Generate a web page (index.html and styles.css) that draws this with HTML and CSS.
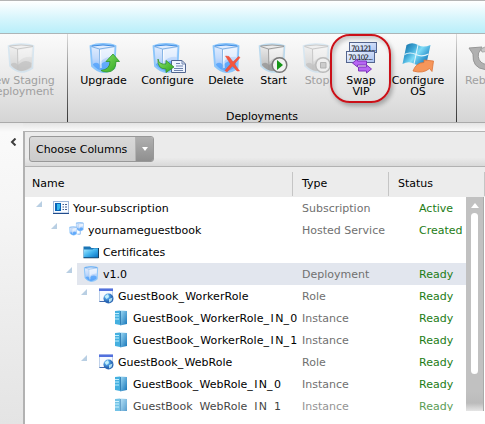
FILE: index.html
```html
<!DOCTYPE html>
<html lang="en">
<head>
<meta charset="utf-8">
<title>Deployments</title>
<link rel="stylesheet" href="styles.css">
</head>
<body>
<svg class="defs" aria-hidden="true">
  <defs>
    <linearGradient id="gBlue" x1="0" y1="0" x2="0" y2="1"><stop offset="0" stop-color="#e6f0ff"/><stop offset=".5" stop-color="#c3dafb"/><stop offset="1" stop-color="#7db8fb"/></linearGradient>
    <linearGradient id="gGray" x1="0" y1="0" x2="0" y2="1"><stop offset="0" stop-color="#f0f0f0"/><stop offset="1" stop-color="#b4b4b4"/></linearGradient>
    <linearGradient id="gGreen" x1="0" y1="0" x2="1" y2="1"><stop offset="0" stop-color="#8be36a"/><stop offset="1" stop-color="#2ba51c"/></linearGradient>
    <linearGradient id="gServer" x1="0" y1="0" x2="1" y2="1"><stop offset="0" stop-color="#a4def8"/><stop offset="1" stop-color="#1474b8"/></linearGradient>
    <linearGradient id="gFolder" x1="0" y1="0" x2="1" y2="1"><stop offset="0" stop-color="#a9eaff"/><stop offset=".5" stop-color="#43b4ee"/><stop offset="1" stop-color="#0873c4"/></linearGradient>
    <radialGradient id="gGlobe" cx=".35" cy=".3"><stop offset="0" stop-color="#b6ecff"/><stop offset=".5" stop-color="#4c9de2"/><stop offset="1" stop-color="#2a66b4"/></radialGradient>
    <linearGradient id="gWin" gradientUnits="userSpaceOnUse" x1="2" y1="2" x2="26" y2="22"><stop offset="0" stop-color="#1672a8"/><stop offset=".3" stop-color="#3fa7d6"/><stop offset=".5" stop-color="#7fdcf7"/><stop offset=".75" stop-color="#3a9fd4"/><stop offset="1" stop-color="#1268ad"/></linearGradient>
    <linearGradient id="gIp" x1="0" y1="0" x2="1" y2="1"><stop offset="0" stop-color="#f0f5ff"/><stop offset="1" stop-color="#a9c1f0"/></linearGradient>
  </defs>
  <symbol id="cube" viewBox="0 0 28 30">
    <path d="M1.500 3Q7 .9 14 1Q22 .9 26.500 3L25.500 25Q20 29 14 29Q8 28 3 23Z" fill="url(#gBlue)" stroke="#8ac5fb" stroke-width="1.800"/>
    <path d="M11 7L25 4.500L24.500 14Q17 13 11 19Z" fill="#fff" opacity=".5"/>
    <path d="M4 21Q8 18 11 22Q18 15 24.500 20L24 24Q18 28 14 28Q8 27 4 22Z" fill="#3f98fa" opacity=".65"/>
    <path d="M2 3.500L10.500 6L26 3.500M10.500 6L11 27" fill="none" stroke="#82b2e4"/>
    <path d="M3 3Q14 1 25 3" fill="none" stroke="#3f8be0"/>
    <path d="M11.500 7L12 25" stroke="#fff"/>
  </symbol>
  <symbol id="cubeg" viewBox="0 0 28 30">
    <path d="M1.500 3Q7 .9 14 1Q22 .9 26.500 3L25.500 25Q20 29 14 29Q8 28 3 23Z" fill="url(#gGray)" stroke="#bcdaee" stroke-width="1.600"/>
    <path d="M11 7L25 4.500L24.500 14Q17 13 11 19Z" fill="#fff" opacity=".5"/>
    <path d="M4 21Q8 18 11 22Q18 15 24.500 20L24 24Q18 28 14 28Q8 27 4 22Z" fill="#888" opacity=".6"/>
    <path d="M2.500 3.500L10.500 6L26 3.500M10.500 6L11 27M2.500 3Q14 1 26 3" fill="none" stroke="#959595" stroke-width=".9"/>
  </symbol>
  <symbol id="subscription" viewBox="0 0 16 13">
    <rect x=".5" y=".5" width="15" height="11.500" fill="#f8fbff" stroke="#9fb6d8"/><path d="M0 12.500H16" stroke="#214c8c"/>
    <rect x="2" y="2" width="6" height="8" fill="#0863b7"/><path d="M4 3H7V7L6 9H4Z" fill="#36b8ee"/>
    <path d="M9.500 3.500H11M12 3.500H14M9.500 6H11M12 6H14M9.500 8.500H11M12 8.500H14" stroke="#435f91"/>
  </symbol>
  <symbol id="service" viewBox="0 0 18 16">
    <use href="#cube" x="8" y="0" width="9" height="10"/><use href="#cube" x="1" y="4" width="9" height="11"/>
    <path d="M10 13H13V9" stroke="#8ab9ef" fill="none"/>
  </symbol>
  <symbol id="folder" viewBox="0 0 16 13">
    <path d="M.5 1H7L8.500 2.500H15.500V12.500H.5Z" fill="#1b75b5"/><path d="M1 4H9.500L11 3H15V11.500H1Z" fill="url(#gFolder)"/><path d="M.5 12.500H15.500V2.500" fill="none" stroke="#173f60"/>
  </symbol>
  <symbol id="role" viewBox="0 0 16 16">
    <rect x="1.500" y="1" width="13" height="12.500" fill="#f6faff" stroke="#c0d2ea"/><path d="M1 .5H15V3H1Z" fill="#5270dd"/><path d="M1.500 13.500H7" stroke="#3f67ac"/>
    <circle cx="10.500" cy="10.500" r="5" fill="url(#gGlobe)"/><path d="M6.500 8.500L10 6L11 9L8.500 11ZM11 11L14.500 9.500L13.500 13L11 14.500Z" fill="#c9f3fa" opacity=".85"/>
  </symbol>
  <symbol id="server" viewBox="0 0 14 16">
    <path d="M1 1L6 .5V15L1 14Z" fill="#45b0e0"/><path d="M6 .5L13 1V14L6 15.500Z" fill="url(#gServer)"/><path d="M1 3.500H5M1 6H5M1 9H5" stroke="#bdefff"/><path d="M6.500 1V14.500" stroke="#2674ac" stroke-width=".8"/>
  </symbol>
</svg>

<header class="banner"></header>
<nav class="ribbon">
  <section class="group first">
    <div class="tools">
      <button class="tool w93 off"><svg class="ico faded" viewBox="0 0 32 30"><use href="#cubeg" x="2" width="28" height="30"/></svg><span>New Staging<br>Deployment</span></button>
    </div>
  </section>
  <section class="group main">
    <div class="tools">
      <button class="tool w63"><svg class="ico" viewBox="0 0 32 30"><use href="#cube" x="1" width="28" height="30"/><path d="M13 27.500Q22 26.500 22 18.500H18L25 11L31.500 18.500H28Q28 29 19 29Q15 29 13 27.500Z" fill="url(#gGreen)" stroke="#2d962a" stroke-width=".8"/></svg><span>Upgrade</span></button>
      <button class="tool w65"><svg class="ico wide" viewBox="0 0 36 30"><use href="#cube" x="2" width="28" height="30"/><path d="M21.500 17.500H32L35.500 21V29.500H21.500Z" fill="#eef4ff" stroke="#51658f"/><path d="M32 17.500V21H35M26 20.500H30M26 23H33M24 25.500H33M24 27.500H33" fill="none" stroke="#6e83ad"/><path d="M8 16Q9 22 16 21V17.500L24 24L16 29.500V26Q7 26 8 16Z" fill="url(#gGreen)" stroke="#38922b" stroke-width=".8"/></svg><span>Configure</span></button>
      <button class="tool w52"><svg class="ico" viewBox="0 0 32 30"><use href="#cube" x="2" width="28" height="30"/><path d="M15.500 13L19 13.500L23 19L28.500 13.500L30 14.500L24.500 21L29.500 28H27L22.500 23L17 29L15 27.500L20.500 21Z" fill="#f4563e" stroke="#e74737" stroke-width=".5"/></svg><span>Delete</span></button>
      <button class="tool w43"><svg class="ico" viewBox="0 0 32 30"><use href="#cubeg" x="0" width="28" height="30"/><circle cx="21.500" cy="22" r="7.300" fill="#f2f2f2" stroke="#777" stroke-width="1.500"/><path d="M19 17V27L25 22Z" fill="#159516"/></svg><span>Start</span></button>
      <button class="tool w44 off"><svg class="ico faded" viewBox="0 0 32 30"><use href="#cubeg" x="1" width="28" height="30"/><circle cx="22" cy="22" r="7.300" fill="#eee" stroke="#888" stroke-width="1.500"/><path d="M19.500 19.500H25V25H19.500Z" fill="#aaa" stroke="#777"/></svg><span>Stop</span></button>
      <div class="swap-slot"><button class="tool w44"><svg class="ico" viewBox="0 0 32 30"><rect x="4.500" y="-.5" width="27" height="10" fill="url(#gIp)" stroke="#54658e"/><rect x="1.500" y="8.500" width="28" height="11" fill="url(#gIp)" stroke="#54658e"/><text x="6" y="7.500" class="ip" textLength="25">70.121...</text><text x="3" y="17" class="ip" textLength="25">70.102...</text><path d="M7.500 20L12.500 16V18H21.500V22H12.500V24Z" fill="#b766f3" stroke="#7f35bd"/><path d="M26.500 26L21.500 22V24H13.500V28H21.500V30Z" fill="#b766f3" stroke="#7f35bd"/></svg><span>Swap<br>VIP</span></button><i class="callout"></i></div>
      <button class="tool w70"><svg class="ico" viewBox="0 0 32 30"><path d="M4.500 2Q10-1.500 16 2Q21 5 28.500 2L24.500 20.500Q18 24 12.500 21Q7 17.500 .5 21Z" fill="url(#gWin)"/><path d="M16 2L12 21M2.500 11.500Q8 8.500 14 11.500Q20 14.500 26.500 11" fill="none" stroke="#e2f5fc" stroke-width="1.100"/><path d="M11 28Q14 19.500 22 19.500V17L31.500 18L30 28.500L27.500 25.500Q21 31 11 28Z" fill="#f6965a" stroke="#dc7339" stroke-width=".8"/></svg><span>Configure<br>OS</span></button>
    </div>
    <div class="caption">Deployments</div>
  </section>
  <section class="group last">
    <div class="tools"><button class="tool w54 off"><svg class="ico" viewBox="0 0 32 30"><path d="M1 5L14 4L12 8L10.500 10Q9 18 16 21Q22 22 25 17L29 20Q25 27 17 26.500Q4 25 5 11Z" fill="#b0b0b0" stroke="#979797"/><path d="M13 6Q20 1 27 8L23 11Q18 7 14 9Z" fill="#c7c7c7" stroke="#a5a5a5"/></svg><span>Reboot</span></button></div>
  </section>
</nav>

<main class="work">
  <aside class="rail"><svg viewBox="0 0 6 8"><path d="M5 .5L1.500 4L5 7.500" fill="none" stroke="#3e3e3e" stroke-width="2"/></svg></aside>
  <section class="panel">
    <div class="toolbar"><button class="choose"><span>Choose Columns</span><i><svg viewBox="0 0 6 4"><path d="M0 0H6L3 4Z" fill="#fff"/></svg></i></button></div>
    <div class="heads"><span class="h-name">Name</span><span class="h-type">Type</span><span class="h-status">Status</span></div>
    <div class="body">
      <div class="rows">
        <div class="row"><span class="name l0"><b></b><svg class="i16"><use href="#subscription" y="1" width="16" height="13"/></svg><em class="sub">Your-subscription</em></span><span class="type">Subscription</span><span class="status">Active</span></div>
        <div class="row"><span class="name l1"><b></b><svg class="i16"><use href="#service" width="17" height="15"/></svg><em>yournameguestbook</em></span><span class="type">Hosted Service</span><span class="status">Created</span></div>
        <div class="row"><span class="name l2"><b class="none"></b><svg class="i16"><use href="#folder" y="1.500" width="16" height="13"/></svg><em class="cert">Certificates</em></span></div>
        <div class="row selected"><span class="name l2"><b></b><svg class="i16"><use href="#cube" width="16" height="16"/></svg><em>v1.0</em></span><span class="type">Deployment</span><span class="status">Ready</span></div>
        <div class="row"><span class="name l3"><b></b><svg class="i16"><use href="#role" width="16" height="16"/></svg><em class="worker">GuestBook<u>_</u>WorkerRole</em></span><span class="type">Role</span><span class="status">Ready</span></div>
        <div class="row"><span class="name l4"><b class="none"></b><svg class="i16"><use href="#server" x="1" width="14" height="16"/></svg><em class="worker">GuestBook<u>_</u>WorkerRole<u>_I</u>N<u>_</u>0</em></span><span class="type">Instance</span><span class="status">Ready</span></div>
        <div class="row"><span class="name l4"><b class="none"></b><svg class="i16"><use href="#server" x="1" width="14" height="16"/></svg><em class="worker">GuestBook<u>_</u>WorkerRole<u>_I</u>N<u>_</u>1</em></span><span class="type">Instance</span><span class="status">Ready</span></div>
        <div class="row"><span class="name l3"><b></b><svg class="i16"><use href="#role" width="16" height="16"/></svg><em>GuestBook<u>_</u>WebRole</em></span><span class="type">Role</span><span class="status">Ready</span></div>
        <div class="row"><span class="name l4"><b class="none"></b><svg class="i16"><use href="#server" x="1" width="14" height="16"/></svg><em>GuestBook<u>_</u>WebRole<u>_I</u>N<u>_</u>0</em></span><span class="type">Instance</span><span class="status">Ready</span></div>
        <div class="row dim"><span class="name l4"><b class="none"></b><svg class="i16"><use href="#server" x="1" width="14" height="16"/></svg><em>GuestBook<u>_</u>WebRole<u>_I</u>N<u>_</u>1</em></span><span class="type">Instance</span><span class="status">Ready</span></div>
      </div>
      <div class="scroll"><svg viewBox="0 0 8 5"><path d="M4 0L8 5H0Z" fill="#fff"/></svg><i></i></div>
    </div>
  </section>
</main>
</body>
</html>
```
FILE: styles.css
```css
* { box-sizing: border-box; }
body { margin: 0; width: 485px; height: 424px; overflow: hidden; background: #fff; font: 11px/11px "DejaVu Sans", sans-serif; color: #000; }
button { font: inherit; color: inherit; border: 0; background: none; padding: 0; margin: 0; }
.defs { display: block; width: 0; height: 0; position: absolute; }
.banner { height: 34px; border-top: 1px solid #b5b5b5; border-bottom: 1px solid #adb5b7; background: linear-gradient(#fff, #d6f5fc 55%, #b9effa); }
.ribbon { display: flex; height: 89px; overflow: hidden; background: linear-gradient(#fbfbfb, #ececec 45%, #d5d5d5); border-bottom: 1px solid #aaa; }
.group { flex: none; position: relative; padding-top: 9px; }
.first { width: 68px; }
.first .tools { margin-left: -26px; }
.main { width: 389px; padding-left: 4px; }
.first, .main { border-right: 1px solid; border-image: linear-gradient(#dedede, #888 45%, #333) 1; border-width: 0 1px 0 0; }
.tools { display: flex; height: 66px; }
.tool { flex: none; display: flex; flex-direction: column; align-items: center; justify-content: flex-start; letter-spacing: -.1px; text-align: center; white-space: nowrap; }
.tool span { margin-top: 2px; }
.off { color: #a0a0a0; }
.ico { flex: none; width: 32px; height: 30px; overflow: visible; }
.wide { width: 36px; }
.faded { opacity: .5; }
.ip { font: 7.5px "DejaVu Sans", sans-serif; fill: #111; }
.w93 { width: 93px; } .w63 { width: 63px; } .w65 { width: 65px; } .w52 { width: 52px; }
.w43 { width: 43px; } .w44 { width: 44px; } .w70 { width: 70px; } .w54 { width: 54px; }
.swap-slot { position: relative; }
.callout { position: absolute; left: -9px; top: -9px; width: 61px; height: 69px; border: 2px solid #cb1018; border-radius: 20px; box-shadow: 2px 3px 4px #0004, inset 2px 3px 4px #0003; }
.caption { text-align: center; height: 13px; line-height: 13px; margin-left: -4px; padding-top: 1px; letter-spacing: -.1px; }
.work { display: flex; height: 301px; }
.rail { width: 23px; padding: 15px 0 0 10px; background: linear-gradient(#e8e8e8, #fafafa 9px, #f5f5f5 30%, #e4e4e4); }
.rail svg { display: block; width: 7px; height: 8px; }
.panel { flex: 1; padding-top: 8px; background: linear-gradient(#e4e4e4, #fafafa 8px, #fff 9px); }
.toolbar { height: 36px; border: solid #b2b2b2; border-width: 1px 0 1px 2px; padding: 4px 0 0 4px; background: linear-gradient(#ebebeb 75%, #d9d9d9); }
.choose { display: flex; width: 125px; height: 26px; border: 1px solid #989898; border-radius: 3px; background: linear-gradient(#d9d9d9, #cbcbcb); overflow: hidden; }
.choose span { flex: 1; line-height: 25px; text-align: left; padding-left: 6px; white-space: nowrap; letter-spacing: -.05px; }
.choose i { width: 18px; background: linear-gradient(#b0b0b0, #8f8f8f); border-left: 1px solid #b3b3b3; display: flex; align-items: center; justify-content: center; }
.choose svg { width: 6px; height: 4px; }
.heads { height: 30px; display: flex; padding-top: 5px; background: #ececec; border-left: 2px solid #b2b2b2; line-height: 24px; }
.heads span { height: 24px; border-right: 1px solid #c5c5c5; }
.h-name { width: 268px; padding-left: 7px; }
.h-type { width: 96px; padding-left: 9px; }
.h-status { flex: 1; padding-left: 9px; }
.body { display: flex; height: 227px; border-left: 2px solid #b2b2b2; background: #fff; }
.rows { width: 441px; height: 214px; overflow: hidden; }
.row { display: flex; height: 22px; line-height: 24px; white-space: nowrap; }
.selected { background: linear-gradient(90deg, #fff 52px, #e2e6ee 52px); }
.name { width: 277px; height: 22px; display: flex; align-items: center; }
.name b { width: 6px; height: 6px; margin: -8px 11px 0 0; background: #b9cfe3; clip-path: polygon(100% 0, 100% 100%, 0 100%); }
.name .none { visibility: hidden; }
.i16 { flex: none; width: 16px; height: 16px; margin-right: 4px; }
.name em { font-style: normal; margin-top: 2px; }
.name u { text-decoration: none; letter-spacing: 1.4px; }
.name .sub { letter-spacing: .12px; }
.name .worker { letter-spacing: .08px; }
.name .cert { letter-spacing: -.06px; }
.l0 { padding-left: 11px; } .l1 { padding-left: 26px; } .l2 { padding-left: 41px; } .l3 { padding-left: 56px; } .l4 { padding-left: 71px; }
.type { width: 117px; color: #707070; }
.status { color: #1d7c15; }
.dim { height: 16px; overflow: hidden; opacity: .75; }
.scroll { width: 18px; height: 214px; padding-top: 6px; display: flex; flex-direction: column; align-items: center; background: linear-gradient(#c1c1c1 195px, #bbb 206px, #e5e5e5); border-right: 1px solid #aaa; }
.scroll svg { flex: none; width: 8px; height: 5px; }
.scroll i { width: 7px; height: 161px; margin-top: 5px; border-radius: 4px; background: #fff; }
```
